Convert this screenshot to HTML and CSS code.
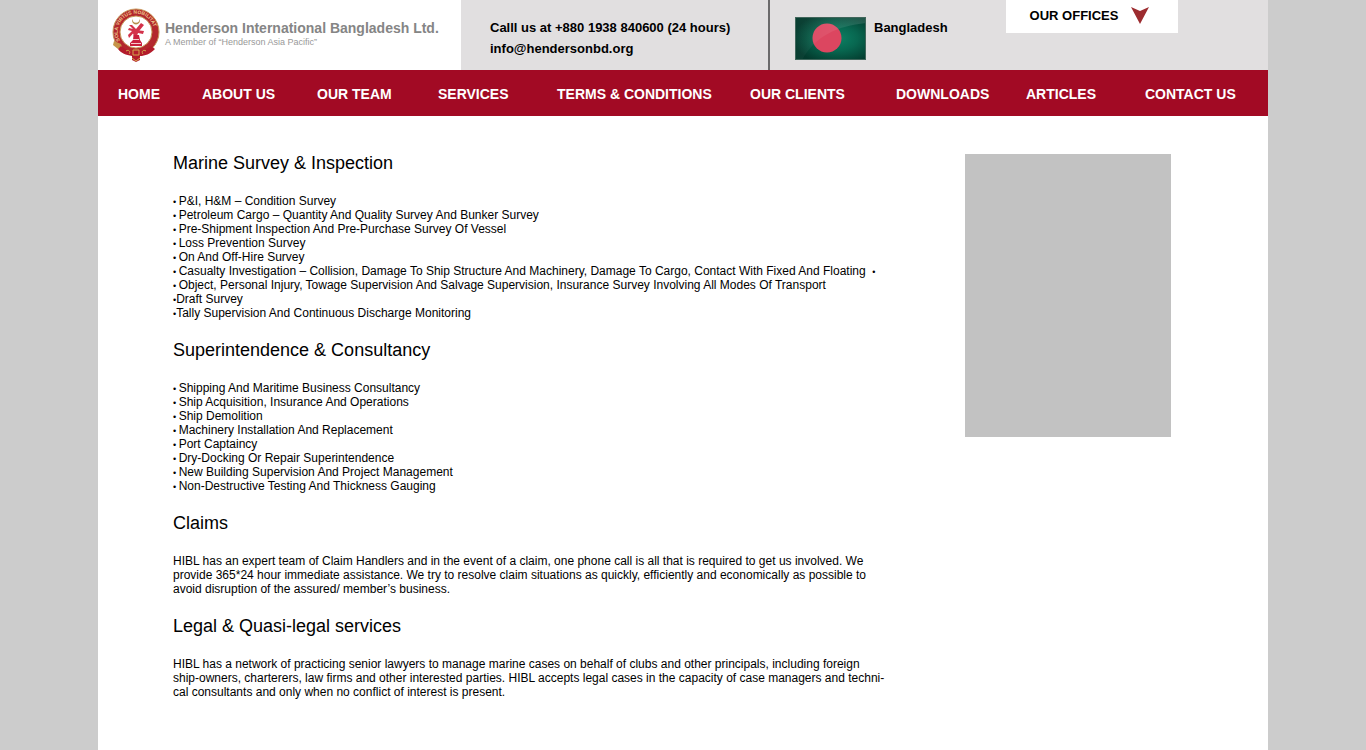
FILE: index.html
```html
<!DOCTYPE html>
<html lang="en">
<head>
<meta charset="utf-8">
<meta name="viewport" content="width=device-width, initial-scale=1">
<title>Services - Henderson International Bangladesh Ltd.</title>
<link rel="stylesheet" href="styles.css">
</head>
<body>
<div class="page">
  <header class="header">
    <a class="brand" href="#">
      <svg class="brand-logo" viewBox="0 0 50 56" aria-hidden="true">
        <circle cx="25" cy="25" r="19.500" fill="#fff" stroke="#b3282d" stroke-width="7"/>
        <circle cx="25" cy="25" r="23" fill="none" stroke="#c79a5b" stroke-width="1"/>
        <circle cx="25" cy="25" r="16" fill="none" stroke="#c79a5b" stroke-width="1"/>
        <path id="motto" d="M9.500 34.500 A18.200 18.200 0 1 1 40.500 34.500" fill="none"/>
        <text class="motto"><textPath href="#motto" startOffset="1">SOLA VIRTUS NOBILITAT</textPath></text>
        <path d="M21.500 11.500 A4 4 0 1 0 28.500 11.500 A3.600 3.400 0 1 1 21.500 11.500Z" fill="#b78d4b"/>
        <path d="M18 18 L21 18 L25 22 L30 16 L33 18 L28.500 23.500 L33 24 L32 27 L27 26 L26 29 L23 29 L22 26.500 L18 31 L17 28 L21 24 L17 23 L18 21 L22 22Z" fill="#d3324a"/>
        <path d="M22.500 28 L28 28 L29 33 L31 36 L31 39 L19 39 L19 36 L22 33Z" fill="#c91f3d"/>
        <path d="M22 32.500h6M20 36.500h10" stroke="#f6c9ca" stroke-width="1"/>
        <path d="M3 34 L10 37 L11 40 L7 42 L2 38Z" fill="#c59449"/>
        <path d="M10 39 C17 46 33 46 40 39 L44 42 C39 47 34 49 29 49 L29 53 L25 55 L21 53 L21 49 C15 48 10 46 7 42Z" fill="#b31c2b"/>
        <path d="M15 44 C18 42 20 45 18 47 M35 44 C32 42 30 45 32 47 M22 43 h6 v5 h-6Z M21 51 L25 54 L29 51" fill="none" stroke="#d2a64d" stroke-width="1"/>
      </svg>
      <span class="brand-text">
        <span class="brand-name">Henderson International Bangladesh Ltd.</span>
        <span class="brand-tag">A Member of “Henderson Asia Pacific”</span>
      </span>
    </a>
    <div class="contact">
      <span>Calll us at +880 1938 840600 (24 hours)</span>
      <a href="mailto:info@hendersonbd.org">info@hendersonbd.org</a>
    </div>
    <div class="country">
      <svg class="flag" viewBox="0 0 71 43" role="img" aria-label="Flag of Bangladesh">
        <defs>
          <radialGradient id="field" cx=".6" cy=".5" r=".62">
            <stop offset="0" stop-color="#0c8063"/>
            <stop offset=".45" stop-color="#086750"/>
            <stop offset="1" stop-color="#033a2d"/>
          </radialGradient>
          <linearGradient id="shine" x1="0" y1="0" x2="1" y2="0">
            <stop offset="0" stop-color="#fff" stop-opacity=".02"/>
            <stop offset="1" stop-color="#fff" stop-opacity=".13"/>
          </linearGradient>
        </defs>
        <rect width="71" height="43" fill="url(#field)"/>
        <circle cx="32" cy="21" r="14.500" fill="#dc4660"/>
        <path d="M0 0H71V6C42 9 20 19 7 43H0Z" fill="url(#shine)"/>
        <rect x=".5" y=".5" width="70" height="42" fill="none" stroke="#40665b"/>
      </svg>
      <span>Bangladesh</span>
    </div>
    <button class="offices" type="button">
      OUR OFFICES
      <svg class="offices-arrow" viewBox="0 0 18 17" aria-hidden="true"><path d="M0 0 L9 4 L18 0 L9 17Z" fill="#9c2b2f"/></svg>
    </button>
  </header>

  <nav class="nav">
    <a href="#">HOME</a>
    <a href="#">ABOUT US</a>
    <a href="#">OUR TEAM</a>
    <a href="#">SERVICES</a>
    <a href="#">TERMS &amp; CONDITIONS</a>
    <a href="#">OUR CLIENTS</a>
    <a href="#">DOWNLOADS</a>
    <a href="#">ARTICLES</a>
    <a href="#">CONTACT US</a>
  </nav>

  <div class="body">
    <main class="content">
      <section>
        <h2>Marine Survey &amp; Inspection</h2>
        <ul>
          <li><span class="dot">• </span>P&amp;I, H&amp;M – Condition Survey</li>
          <li><span class="dot">• </span>Petroleum Cargo – Quantity And Quality Survey And Bunker Survey</li>
          <li><span class="dot">• </span>Pre-Shipment Inspection And Pre-Purchase Survey Of Vessel</li>
          <li><span class="dot">• </span>Loss Prevention Survey</li>
          <li><span class="dot">• </span>On And Off-Hire Survey</li>
          <li><span class="dot">• </span>Casualty Investigation – Collision, Damage To Ship Structure And Machinery, Damage To Cargo, Contact With Fixed And Floating &nbsp;<span class="dot">•</span></li>
          <li><span class="dot">• </span>Object, Personal Injury, Towage Supervision And Salvage Supervision, Insurance Survey Involving All Modes Of Transport</li>
          <li><span class="dot">•</span>Draft Survey</li>
          <li><span class="dot">•</span>Tally Supervision And Continuous Discharge Monitoring</li>
        </ul>
      </section>
      <section>
        <h2>Superintendence &amp; Consultancy</h2>
        <ul>
          <li><span class="dot">• </span>Shipping And Maritime Business Consultancy</li>
          <li><span class="dot">• </span>Ship Acquisition, Insurance And Operations</li>
          <li><span class="dot">• </span>Ship Demolition</li>
          <li><span class="dot">• </span>Machinery Installation And Replacement</li>
          <li><span class="dot">• </span>Port Captaincy</li>
          <li><span class="dot">• </span>Dry-Docking Or Repair Superintendence</li>
          <li><span class="dot">• </span>New Building Supervision And Project Management</li>
          <li><span class="dot">• </span>Non-Destructive Testing And Thickness Gauging</li>
        </ul>
      </section>
      <section>
        <h2>Claims</h2>
        <p>HIBL has an expert team of Claim Handlers and in the event of a claim, one phone call is all that is required to get us involved. We<br>
        provide 365*24 hour immediate assistance. We try to resolve claim situations as quickly, efficiently and economically as possible to<br>
        avoid disruption of the assured/ member’s business.</p>
      </section>
      <section>
        <h2>Legal &amp; Quasi-legal services</h2>
        <p>HIBL has a network of practicing senior lawyers to manage marine cases on behalf of clubs and other principals, including foreign<br>
        ship-owners, charterers, law firms and other interested parties. HIBL accepts legal cases in the capacity of case managers and techni-<br>
        cal consultants and only when no conflict of interest is present.</p>
      </section>
    </main>
    <aside class="panel"></aside>
  </div>
</div>
</body>
</html>
```

FILE: styles.css
```css
* {
  box-sizing: border-box;
}

body {
  margin: 0;
  background: #cccccc;
  color: #000;
  font-family: "Liberation Sans", Arial, sans-serif;
  font-size: 12px;
  line-height: 14px;
}

a {
  color: inherit;
  text-decoration: none;
}

.page {
  max-width: 1170px;
  min-height: 100vh;
  margin: 0 auto;
  background: #fff;
}

.header {
  display: flex;
  align-items: flex-start;
  min-height: 70px;
  padding-right: 90px;
  background: #e1dfe0;
  font-size: 13px;
  font-weight: bold;
}

.brand {
  display: flex;
  align-items: flex-start;
  align-self: stretch;
  flex: 0 0 363px;
  gap: 4px;
  padding: 7px 0 0 13px;
  background: #fff;
}

.brand-logo {
  width: 50px;
  height: 56px;
}

.motto {
  fill: #edc68a;
  font-size: 5px;
  font-weight: bold;
}

.brand-text {
  display: flex;
  flex-direction: column;
  padding-top: 13px;
  white-space: nowrap;
}

.brand-name {
  color: #858585;
  font-size: 14px;
  line-height: 16px;
}

.brand-tag {
  color: #999;
  font-size: 9px;
  font-weight: normal;
  line-height: 12px;
}

.contact {
  display: flex;
  flex-direction: column;
  align-self: stretch;
  flex: 0 0 309px;
  padding: 17px 0 0 29px;
  border-right: 2px solid #6b6a6b;
  line-height: 21px;
  white-space: nowrap;
}

.country {
  display: flex;
  gap: 8px;
  padding: 17px 0 0 25px;
  line-height: 21px;
}

.flag {
  width: 71px;
  height: 43px;
}

.offices {
  display: flex;
  align-items: center;
  justify-content: center;
  gap: 13px;
  width: 172px;
  height: 33px;
  margin-left: auto;
  padding: 0 5px 2px 0;
  border: 0;
  background: #fff;
  color: #000;
  font: inherit;
  cursor: pointer;
}

.offices-arrow {
  width: 18px;
  height: 17px;
}

.nav {
  display: grid;
  grid-template-columns: 84fr 115fr 121fr 119fr 193fr 146fr 130fr 119fr 123fr;
  align-items: center;
  min-height: 46px;
  padding: 2px 0 0 20px;
  background: #a20a24;
  color: #fff;
  font-size: 14px;
  font-weight: bold;
  line-height: 16px;
  white-space: nowrap;
}

.body {
  display: flex;
  justify-content: space-between;
  align-items: flex-start;
  gap: 24px;
  padding: 38px 97px 38px 75px;
}

.content {
  display: flex;
  flex-direction: column;
  gap: 21px;
}

.content h2 {
  margin: 0 0 22px;
  font-size: 18px;
  font-weight: normal;
  line-height: 18px;
}

.content ul {
  margin: 0;
  padding: 0;
  list-style: none;
}

.content p {
  margin: 0;
}

.dot {
  font-size: 9px;
  line-height: 1;
}

.panel {
  flex: 0 0 206px;
  height: 283px;
  background: #c2c2c2;
}
```
